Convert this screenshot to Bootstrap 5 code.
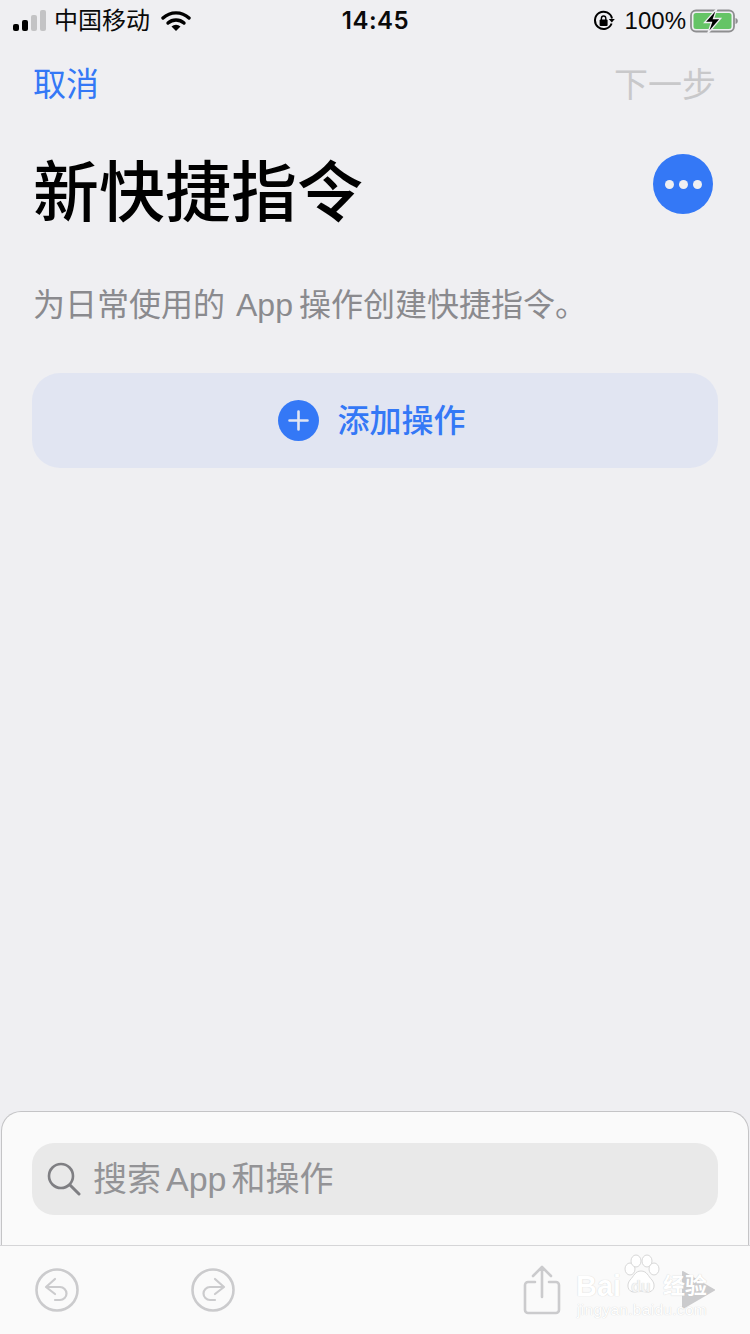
<!DOCTYPE html>
<html lang="zh-CN">
<head>
  <meta charset="UTF-8">
  <meta name="viewport" content="width=device-width, initial-scale=1.0">
  <title>新快捷指令</title>
  <link href="https://cdn.jsdelivr.net/npm/bootstrap@5.3.0/dist/css/bootstrap.min.css" rel="stylesheet">
  <style>
    html, body { height: 100%; }
    body {
      background: #efeff2;
      font-family: "Liberation Sans", "Noto Sans CJK SC", sans-serif;
      overflow: hidden;
    }
    .screen { height: 1334px; }
    .status-bar { height: 41px; padding: 0 12px 0 13px; font-size: 24px; line-height: 41px; color: #0a0a0a; }
    .status-time { font-family: "Inter", "Liberation Sans", sans-serif; font-weight: 600; font-size: 24px; letter-spacing: .5px; }
    .status-side { width: 250px; }
    .signal { gap: 3px; }
    .signal-bar { width: 6px; background: #c3c3c5; border-radius: 2px; display: block; }
    .signal-bar.on { background: #000; }
    .sb1 { height: 7px; } .sb2 { height: 11px; } .sb3 { height: 16px; } .sb4 { height: 21px; }
    .wifi-icon { margin-left: 11px; }
    .lock-icon { margin-right: 2px; }
    .top-nav { padding: 22px 34px 0 33px; font-size: 33px; line-height: 44px; }
    .nav-cancel { color: #3478f6; }
    .nav-next { color: #c8c8ca; font-size: 34px; }
    .title-row { padding: 46px 37px 0 33px; height: 133px; }
    .page-title { font-size: 66px; font-weight: 500; line-height: 80px; color: #000; margin: 0; }
    .more-btn { width: 60px; height: 60px; background: #3478f6; gap: 5px; margin-top: 1px; }
    .more-btn i { width: 9px; height: 9px; background: #efeff2; border-radius: 50%; display: block; }
    .subtitle { padding: 44px 33px 0; margin: 0; font-size: 32px; line-height: 42px; color: #8a8a8e; white-space: nowrap; }
    .subtitle-app { margin: 0 6px 0 11px; }
    .add-action {
      margin: 47px 32px 0; height: 95px; width: 686px; background: #e1e5f2;
      border: 0; border-radius: 28px; color: #3478f6; font-size: 32px; font-weight: 500; gap: 18px; padding: 0 6px 0 0;
    }
    .sheet {
      margin: auto 1px 0; background: #fafafa; border: 1px solid #c4c4c6; border-bottom: 0;
      border-radius: 20px 20px 0 0; padding: 31px 30px 30px; height: 134px;
    }
    .search-box {
      height: 72px; background: #e9e9e9; border-radius: 22px; padding: 0 15px; gap: 12px;
      font-size: 34px; color: #939396;
    }
    .search-app { margin: 0 5px; }
    .tool-bar {
      height: 89px; background: #fafafa; border-top: 1px solid #d5d5d7;
      padding: 0 35px; position: relative;
    }
    .tool-spacer { width: 112px; }
    .tool-spacer-wide { width: 120px; }
    .watermark {
      position: absolute; left: 575px; top: 8px; width: 140px; height: 76px;
      color: #fff; text-shadow: 0 0 1px #c8c8c8;
    }
    .wm-brand { position: absolute; left: 1px; top: 15px; font-size: 29px; font-weight: 700; line-height: 34px; white-space: nowrap; }
    .wm-du { position: absolute; left: 56px; top: 23px; font-size: 16px; font-weight: 700; line-height: 20px; color: #f4f4f4; }
    .wm-jing { position: absolute; left: 88px; top: 19px; font-size: 22px; font-weight: 700; line-height: 26px; white-space: nowrap; }
    .wm-url { position: absolute; left: 2px; top: 47px; font-size: 15.500px; line-height: 18px; letter-spacing: .3px; white-space: nowrap; }
    .wm-paw { position: absolute; left: 45px; top: 0; }
  </style>
</head>
<body>
<div class="screen d-flex flex-column">
  <div class="status-bar d-flex align-items-center justify-content-between">
    <div class="status-side d-flex align-items-center">
      <span class="signal d-flex align-items-end">
        <span class="signal-bar on sb1"></span>
        <span class="signal-bar on sb2"></span>
        <span class="signal-bar sb3"></span>
        <span class="signal-bar sb4"></span>
      </span>
      <span class="ms-2">中国移动</span>
      <svg class="wifi-icon" width="30" height="22" viewBox="0 0 30 22">
        <path d="M2 8a19 19 0 0 1 26 0" fill="none" stroke="#000" stroke-width="3.400" stroke-linecap="round"/>
        <path d="M7 13a12 12 0 0 1 16 0" fill="none" stroke="#000" stroke-width="3.400" stroke-linecap="round"/>
        <path d="M10.500 16.500a7 7 0 0 1 9 0L15 21z" fill="#000"/>
      </svg>
    </div>
    <div class="status-time">14:45</div>
    <div class="status-side d-flex align-items-center justify-content-end">
      <svg class="lock-icon" width="22" height="22" viewBox="0 0 22 22">
        <path d="M18.600 13.500A8.600 8.600 0 1 1 19 8.500" fill="none" stroke="#000" stroke-width="2"/>
        <path d="M15.800 9h6l-3 3.400z" fill="#000"/>
        <rect x="6.600" y="9.600" width="8" height="6.400" rx="1" fill="#000"/>
        <path d="M8.400 10V8.200a2.200 2.200 0 0 1 4.400 0V10" fill="none" stroke="#000" stroke-width="1.400"/>
      </svg>
      <span class="ms-2">100%</span>
      <svg class="ms-1" width="48" height="26" viewBox="0 0 48 26">
        <rect x="1" y="2.500" width="43" height="21" rx="5" fill="none" stroke="#8e8e90" stroke-width="1.800"/>
        <rect x="3.500" y="5" width="38" height="16" rx="2.500" fill="#65c466"/>
        <path d="M45.500 10c1.500.4 2.300 1.500 2.300 3s-.8 2.600-2.300 3z" fill="#8e8e90"/>
        <path d="M27 0.500 L14.500 14.500h7l-3.800 11 13-15h-7.200z" fill="#000" stroke="#efeff2" stroke-width="1.300"/>
      </svg>
    </div>
  </div>

  <div class="top-nav d-flex justify-content-between">
    <span class="nav-cancel">取消</span>
    <span class="nav-next">下一步</span>
  </div>

  <div class="title-row d-flex justify-content-between align-items-start">
    <h1 class="page-title">新快捷指令</h1>
    <span class="more-btn rounded-circle d-flex align-items-center justify-content-center"><i></i><i></i><i></i></span>
  </div>

  <p class="subtitle">为日常使用的<span class="subtitle-app">App</span>操作创建快捷指令。</p>

  <button class="add-action d-flex align-items-center justify-content-center" type="button">
    <svg width="41" height="41" viewBox="0 0 41 41">
      <circle cx="20.500" cy="20.500" r="20.500" fill="#3478f6"/>
      <path d="M20.500 11.500v18M11.500 20.500h18" stroke="#e1e5f2" stroke-width="2.600" stroke-linecap="round"/>
    </svg>
    <span>添加操作</span>
  </button>

  <div class="sheet">
    <div class="search-box d-flex align-items-center">
      <svg width="34" height="34" viewBox="0 0 34 34">
        <circle cx="14" cy="14" r="12" fill="none" stroke="#7f7f83" stroke-width="2.600"/>
        <path d="M23 23l9 9" stroke="#7f7f83" stroke-width="3" stroke-linecap="round"/>
      </svg>
      <span>搜索<span class="search-app">App</span>和操作</span>
    </div>
  </div>

  <div class="tool-bar d-flex align-items-center justify-content-between">
    <div class="d-flex align-items-center">
      <svg width="44" height="44" viewBox="0 0 44 44">
        <circle cx="22" cy="22" r="20.500" fill="none" stroke="#cbcbcd" stroke-width="2.600"/>
        <path d="M20 11l-9 8 9 7M11.500 19H25a6.500 6.500 0 0 1 0 13h-5" fill="none" stroke="#cbcbcd" stroke-width="2.200" stroke-linecap="round" stroke-linejoin="round"/>
      </svg>
      <span class="tool-spacer"></span>
      <svg width="44" height="44" viewBox="0 0 44 44">
        <circle cx="22" cy="22" r="20.500" fill="none" stroke="#cbcbcd" stroke-width="2.600"/>
        <path d="M24 11l9 8-9 7M32.500 19H19a6.500 6.500 0 0 0 0 13h5" fill="none" stroke="#cbcbcd" stroke-width="2.200" stroke-linecap="round" stroke-linejoin="round"/>
      </svg>
    </div>
    <div class="d-flex align-items-center">
      <svg width="38" height="50" viewBox="0 0 38 50">
        <path d="M12 17H5a3 3 0 0 0-3 3v25a3 3 0 0 0 3 3h28a3 3 0 0 0 3-3V20a3 3 0 0 0-3-3h-7" fill="none" stroke="#cbcbcd" stroke-width="2.600" stroke-linecap="round"/>
        <path d="M19 32V3M10 11l9-9 9 9" fill="none" stroke="#cbcbcd" stroke-width="2.600" stroke-linecap="round" stroke-linejoin="round"/>
      </svg>
      <span class="tool-spacer-wide"></span>
      <svg width="34" height="40" viewBox="0 0 34 40">
        <path d="M1 2v36a1 1 0 0 0 1.500.8L33 21a1 1 0 0 0 0-2L2.500 1.200A1 1 0 0 0 1 2z" fill="#cbcbcd"/>
      </svg>
    </div>
    <div class="watermark">
      <svg class="wm-paw" width="42" height="44" viewBox="0 0 42 44">
        <g fill="#fff" stroke="#d8d8d8" stroke-width="1">
          <ellipse cx="10" cy="15" rx="5" ry="6"/>
          <ellipse cx="16" cy="7" rx="5" ry="6"/>
          <ellipse cx="27" cy="7" rx="5" ry="6"/>
          <ellipse cx="34" cy="15" rx="5" ry="6"/>
          <path d="M21 17c6 0 7 5 11 9 4 5 2 12-4 12-3 0-5-1-7-1s-4 1-7 1c-6 0-8-7-4-12 4-4 5-9 11-9z"/>
        </g>
      </svg>
      <span class="wm-brand">Bai</span>
      <span class="wm-du">du</span>
      <span class="wm-jing">经验</span>
      <span class="wm-url">jingyan.baidu.com</span>
    </div>
  </div>
</div>
<script src="https://cdn.jsdelivr.net/npm/bootstrap@5.3.0/dist/js/bootstrap.bundle.min.js"></script>
</body>
</html>
